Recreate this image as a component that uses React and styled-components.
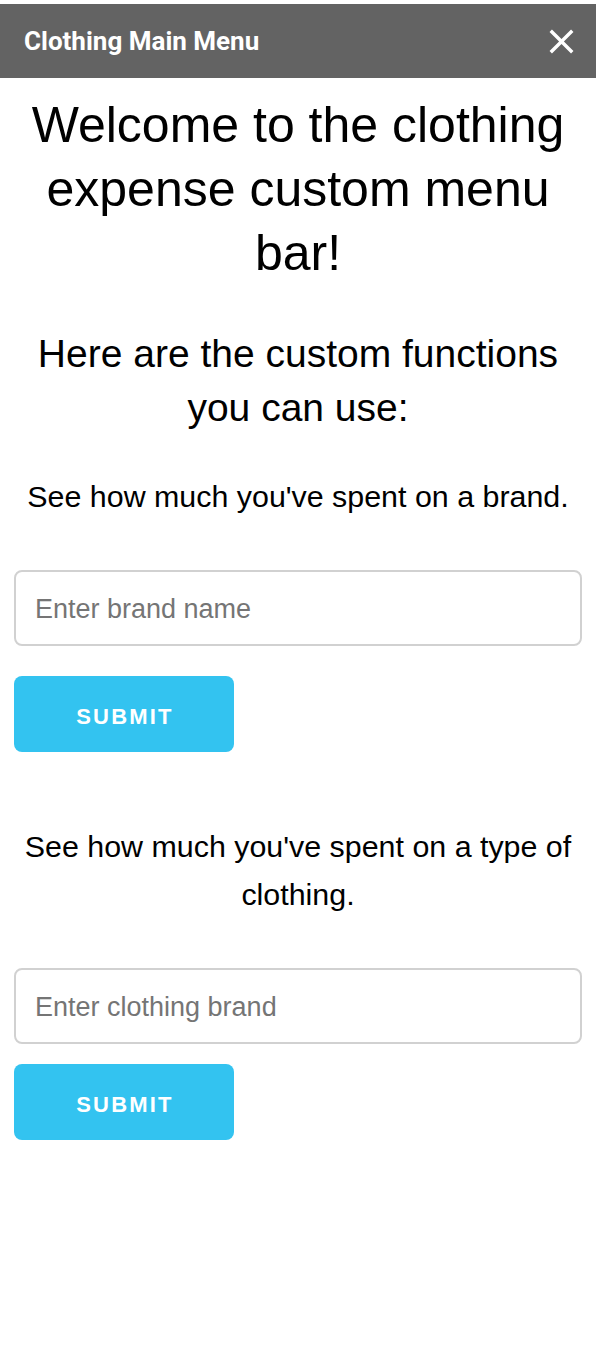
import React from "react";
import styled, { createGlobalStyle } from "styled-components";

const GlobalStyle = createGlobalStyle`
  html, body { margin: 0; padding: 0; background: #ffffff; }
  body { font-family: "Liberation Sans", Arial, sans-serif; color: #000; }
  * { box-sizing: border-box; }
`;

const Page = styled.div`
  padding-top: 4px;
  width: 596px;
`;

const TitleBar = styled.header`
  height: 74px;
  background: #636363;
  display: flex;
  align-items: center;
  justify-content: space-between;
  padding: 0 14px 0 24px;
`;

const Title = styled.h3`
  margin: 0;
  font-family: Roboto, "Liberation Sans", sans-serif;
  font-weight: 700;
  font-size: 26px;
  color: #ffffff;
`;

const CloseButton = styled.button`
  border: 0;
  background: transparent;
  padding: 0;
  width: 41px;
  height: 41px;
  display: flex;
  align-items: center;
  justify-content: center;
  cursor: pointer;
  svg { display: block; }
`;

const Content = styled.main`
  padding: 0 14px;
  text-align: center;
`;

const MainHeading = styled.h1`
  margin: 15px 0 0;
  font-weight: 400;
  font-size: 50px;
  line-height: 64px;
`;

const SubHeading = styled.h2`
  margin: 42px 0 0;
  font-weight: 400;
  font-size: 39px;
  line-height: 54px;
`;

const Prompt = styled.p`
  margin: ${(p) => p.$top}px 0 0;
  font-size: 30.4px;
  line-height: 48px;
`;

const Field = styled.input`
  display: block;
  width: 100%;
  height: 76px;
  margin: 50px 0 0;
  padding: 3px 19px 0;
  border: 2px solid #d1d1d1;
  border-radius: 8px;
  background: #fff;
  font-family: "Liberation Sans", Arial, sans-serif;
  font-size: 27px;
  color: #333;
  outline: none;
  &::placeholder { color: #757575; opacity: 1; }
`;

const SubmitButton = styled.button`
  display: block;
  width: 220px;
  height: 76px;
  margin: ${(p) => p.$gap}px 0 0;
  padding: 6px 0 0 2px;
  border: 0;
  border-radius: 8px;
  background: #33c3f0;
  color: #ffffff;
  font-family: "Liberation Sans", Arial, sans-serif;
  font-weight: 700;
  font-size: 22px;
  letter-spacing: 2.2px;
  text-transform: uppercase;
  cursor: pointer;
`;

const CloseIcon = () => (
  <svg width="41" height="41" viewBox="0 0 24 24" aria-hidden="true">
    <path
      fill="#ffffff"
      d="M19 6.41L17.59 5 12 10.59 6.41 5 5 6.41 10.59 12 5 17.59 6.41 19 12 13.41 17.59 19 19 17.59 13.41 12z"
    />
  </svg>
);

export default function App() {
  return (
    <Page>
      <GlobalStyle />
      <TitleBar>
        <Title>Clothing Main Menu</Title>
        <CloseButton aria-label="Close">
          <CloseIcon />
        </CloseButton>
      </TitleBar>
      <Content>
        <MainHeading>Welcome to the clothing expense custom menu bar!</MainHeading>
        <SubHeading>Here are the custom functions you can use:</SubHeading>

        <Prompt $top={37}>See how much you've spent on a brand.</Prompt>
        <Field type="text" placeholder="Enter brand name" />
        <SubmitButton $gap={30}>Submit</SubmitButton>

        <Prompt $top={70}>See how much you've spent on a type of clothing.</Prompt>
        <Field type="text" placeholder="Enter clothing brand" />
        <SubmitButton $gap={20}>Submit</SubmitButton>
      </Content>
    </Page>
  );
}
